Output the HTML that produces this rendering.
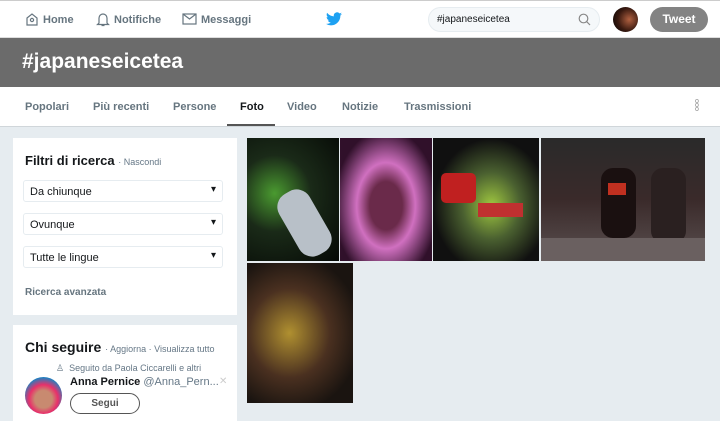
<!DOCTYPE html>
<html><head><style>
*{margin:0;padding:0;box-sizing:border-box}
body{width:720px;height:421px;overflow:hidden;background:#e6ecf0;font-family:"Liberation Sans",sans-serif;position:relative}
.top{position:absolute;left:0;top:0;width:720px;height:38px;background:#fff;border-top:1px solid #ccc;border-bottom:1px solid #ddd}
.nav{position:absolute;top:13px;font-size:11px;font-weight:bold;color:#66757f}
.banner{position:absolute;left:0;top:38px;width:720px;height:49px;background:#6b6b6b}
.banner h1{position:absolute;left:22px;top:12px;color:#fff;font-size:21px;font-weight:bold}
.tabs{position:absolute;left:0;top:87px;width:720px;height:40px;background:#fff;border-bottom:1px solid #d0d6da}
.tab{position:absolute;top:14px;font-size:11px;font-weight:bold;color:#66757f}
.card{position:absolute;left:13px;background:#fff;width:224px}
.sel{position:absolute;left:10px;width:200px;height:22px;border:1px solid #e6ecf0;border-radius:3px;font-size:11px;color:#14171a;padding:5px 6px}
.sel:after{content:"▾";position:absolute;right:6px;top:3px;font-size:10px}
.ph{position:absolute;overflow:hidden}
</style></head><body>
<div class="top">
<svg style="position:absolute;left:25px;top:11px" width="14" height="14" viewBox="0 0 14 14" fill="none" stroke="#66757f" stroke-width="1.2"><path d="M2 6L7 2l5 4v7H2z"/><circle cx="7" cy="8" r="1.6"/></svg>
<div class="nav" style="left:43px">Home</div>
<svg style="position:absolute;left:96px;top:11px" width="14" height="15" viewBox="0 0 14 15" fill="none" stroke="#66757f" stroke-width="1.2"><path d="M3 11V6a4 4 0 018 0v5l1.5 1.5h-11z M5.5 13.5h3"/></svg>
<div class="nav" style="left:114px">Notifiche</div>
<svg style="position:absolute;left:182px;top:12px" width="15" height="12" viewBox="0 0 15 12" fill="none" stroke="#66757f" stroke-width="1.2"><rect x="1" y="1" width="13" height="10"/><path d="M1 1l6.5 5L14 1"/></svg>
<div class="nav" style="left:201px">Messaggi</div>
<svg style="position:absolute;left:326px;top:11px" width="16" height="14" viewBox="0 0 24 20"><path fill="#1da1f2" d="M24 2.4a10 10 0 01-2.8.8A5 5 0 0023.3.4a10 10 0 01-3.1 1.2A4.9 4.9 0 0011.8 6 14 14 0 011.7.9a4.9 4.9 0 001.5 6.6 4.9 4.9 0 01-2.2-.6 4.9 4.9 0 003.9 4.9 5 5 0 01-2.2.1 4.9 4.9 0 004.6 3.4A9.900 9.900 0 010 17.3 14 14 0 007.5 19.5c9 0 14-7.5 14-14v-.6A10 10 0 0024 2.4z"/></svg>
<div style="position:absolute;left:428px;top:6px;width:172px;height:25px;border-radius:13px;background:#f5f8fa;border:1px solid #e6ecf0;font-size:10px;color:#14171a;padding:6px 0 0 8px">#japaneseicetea</div>
<svg style="position:absolute;left:578px;top:12px" width="13" height="13" viewBox="0 0 13 13" fill="none" stroke="#888" stroke-width="1.2"><circle cx="5.5" cy="5.5" r="4.3"/><path d="M8.6 8.6L12 12"/></svg>
<div style="position:absolute;left:613px;top:6px;width:25px;height:25px;border-radius:50%;background:radial-gradient(circle at 65% 50%,#b06040,#3a1a10 55%,#000)"></div>
<div style="position:absolute;left:650px;top:6px;width:58px;height:25px;border-radius:13px;background:#838383;color:#fff;font-size:12px;font-weight:bold;text-align:center;line-height:25px">Tweet</div>
</div>
<div class="banner"><h1>#japaneseicetea</h1></div>
<div class="tabs">
<div class="tab" style="left:25px">Popolari</div>
<div class="tab" style="left:93px">Più recenti</div>
<div class="tab" style="left:173px">Persone</div>
<div class="tab" style="left:240px;color:#14171a">Foto</div>
<div style="position:absolute;left:227px;top:37px;width:48px;height:2px;background:#555"></div>
<div class="tab" style="left:287px">Video</div>
<div class="tab" style="left:342px">Notizie</div>
<div class="tab" style="left:404px">Trasmissioni</div>
<div style="position:absolute;left:695px;top:13px;font-size:7px;line-height:4px;color:#888">o<br>o<br>o</div>
</div>
<div class="card" style="top:138px;height:177px">
<div style="position:absolute;left:12px;top:15px;font-size:13px;font-weight:bold;color:#14171a">Filtri di ricerca <span style="font-size:9px;font-weight:normal;color:#657786">· Nascondi</span></div>
<div class="sel" style="top:42px">Da chiunque</div>
<div class="sel" style="top:75px">Ovunque</div>
<div class="sel" style="top:108px">Tutte le lingue</div>
<div style="position:absolute;left:12px;top:149px;font-size:10px;font-weight:bold;color:#66757f">Ricerca avanzata</div>
</div>
<div class="card" style="top:325px;height:96px">
<div style="position:absolute;left:12px;top:14px;font-size:14px;font-weight:bold;color:#14171a">Chi seguire <span style="font-size:9px;font-weight:normal;color:#657786">· Aggiorna · Visualizza tutto</span></div>
<div style="position:absolute;left:43px;top:38px;font-size:9px;color:#657786">&#9817;&nbsp; Seguito da Paola Ciccarelli e altri</div>
<div style="position:absolute;left:12px;top:52px;width:37px;height:37px;border-radius:50%;background:radial-gradient(circle at 50% 60%,#c88a70 30%,#e8306a 50%,#2080c0 75%)"></div>
<div style="position:absolute;left:57px;top:51px;font-size:11px;color:#14171a;white-space:nowrap"><b>Anna Pernice</b> <span style="color:#657786">@Anna_Pern...</span></div>
<div style="position:absolute;left:206px;top:51px;font-size:10px;color:#ccc">✕</div>
<div style="position:absolute;left:57px;top:68px;width:70px;height:21px;border:1px solid #555;border-radius:11px;font-size:10px;font-weight:bold;color:#555;text-align:center;line-height:19px">Segui</div>
</div>
<div class="ph" style="left:247px;top:138px;width:92px;height:123px;background:radial-gradient(ellipse at 30% 45%,#4a9a30,#1a2a18 40%,#050805)">
<div style="position:absolute;left:40px;top:50px;width:35px;height:70px;background:#b8c0c8;border-radius:15px;transform:rotate(-30deg)"></div></div>
<div class="ph" style="left:340px;top:138px;width:92px;height:123px;background:radial-gradient(ellipse at 50% 55%,#6a2a4a 25%,#d070c0 45%,#30102a 80%)"></div>
<div class="ph" style="left:433px;top:138px;width:106px;height:123px;background:radial-gradient(ellipse at 55% 55%,#a0c840,#4a6030 35%,#101010 70%)">
<div style="position:absolute;left:8px;top:35px;width:35px;height:30px;background:#c02020;border-radius:5px"></div>
<div style="position:absolute;left:45px;top:65px;width:45px;height:14px;background:#c03030"></div></div>
<div class="ph" style="left:541px;top:138px;width:164px;height:123px;background:linear-gradient(180deg,#2a2a2a,#3a2a2a 50%,#5a5050);">
<div style="position:absolute;left:60px;top:30px;width:35px;height:70px;background:#1a1010;border-radius:12px"></div>
<div style="position:absolute;left:67px;top:45px;width:18px;height:12px;background:#c03020"></div>
<div style="position:absolute;left:110px;top:30px;width:35px;height:75px;background:#2a2020;border-radius:12px"></div>
<div style="position:absolute;left:0;top:100px;width:164px;height:23px;background:#6a6060"></div></div>
<div class="ph" style="left:247px;top:263px;width:106px;height:140px;background:radial-gradient(ellipse at 40% 50%,#b09030,#4a3020 45%,#1a1410 80%)"></div>
</body></html>
